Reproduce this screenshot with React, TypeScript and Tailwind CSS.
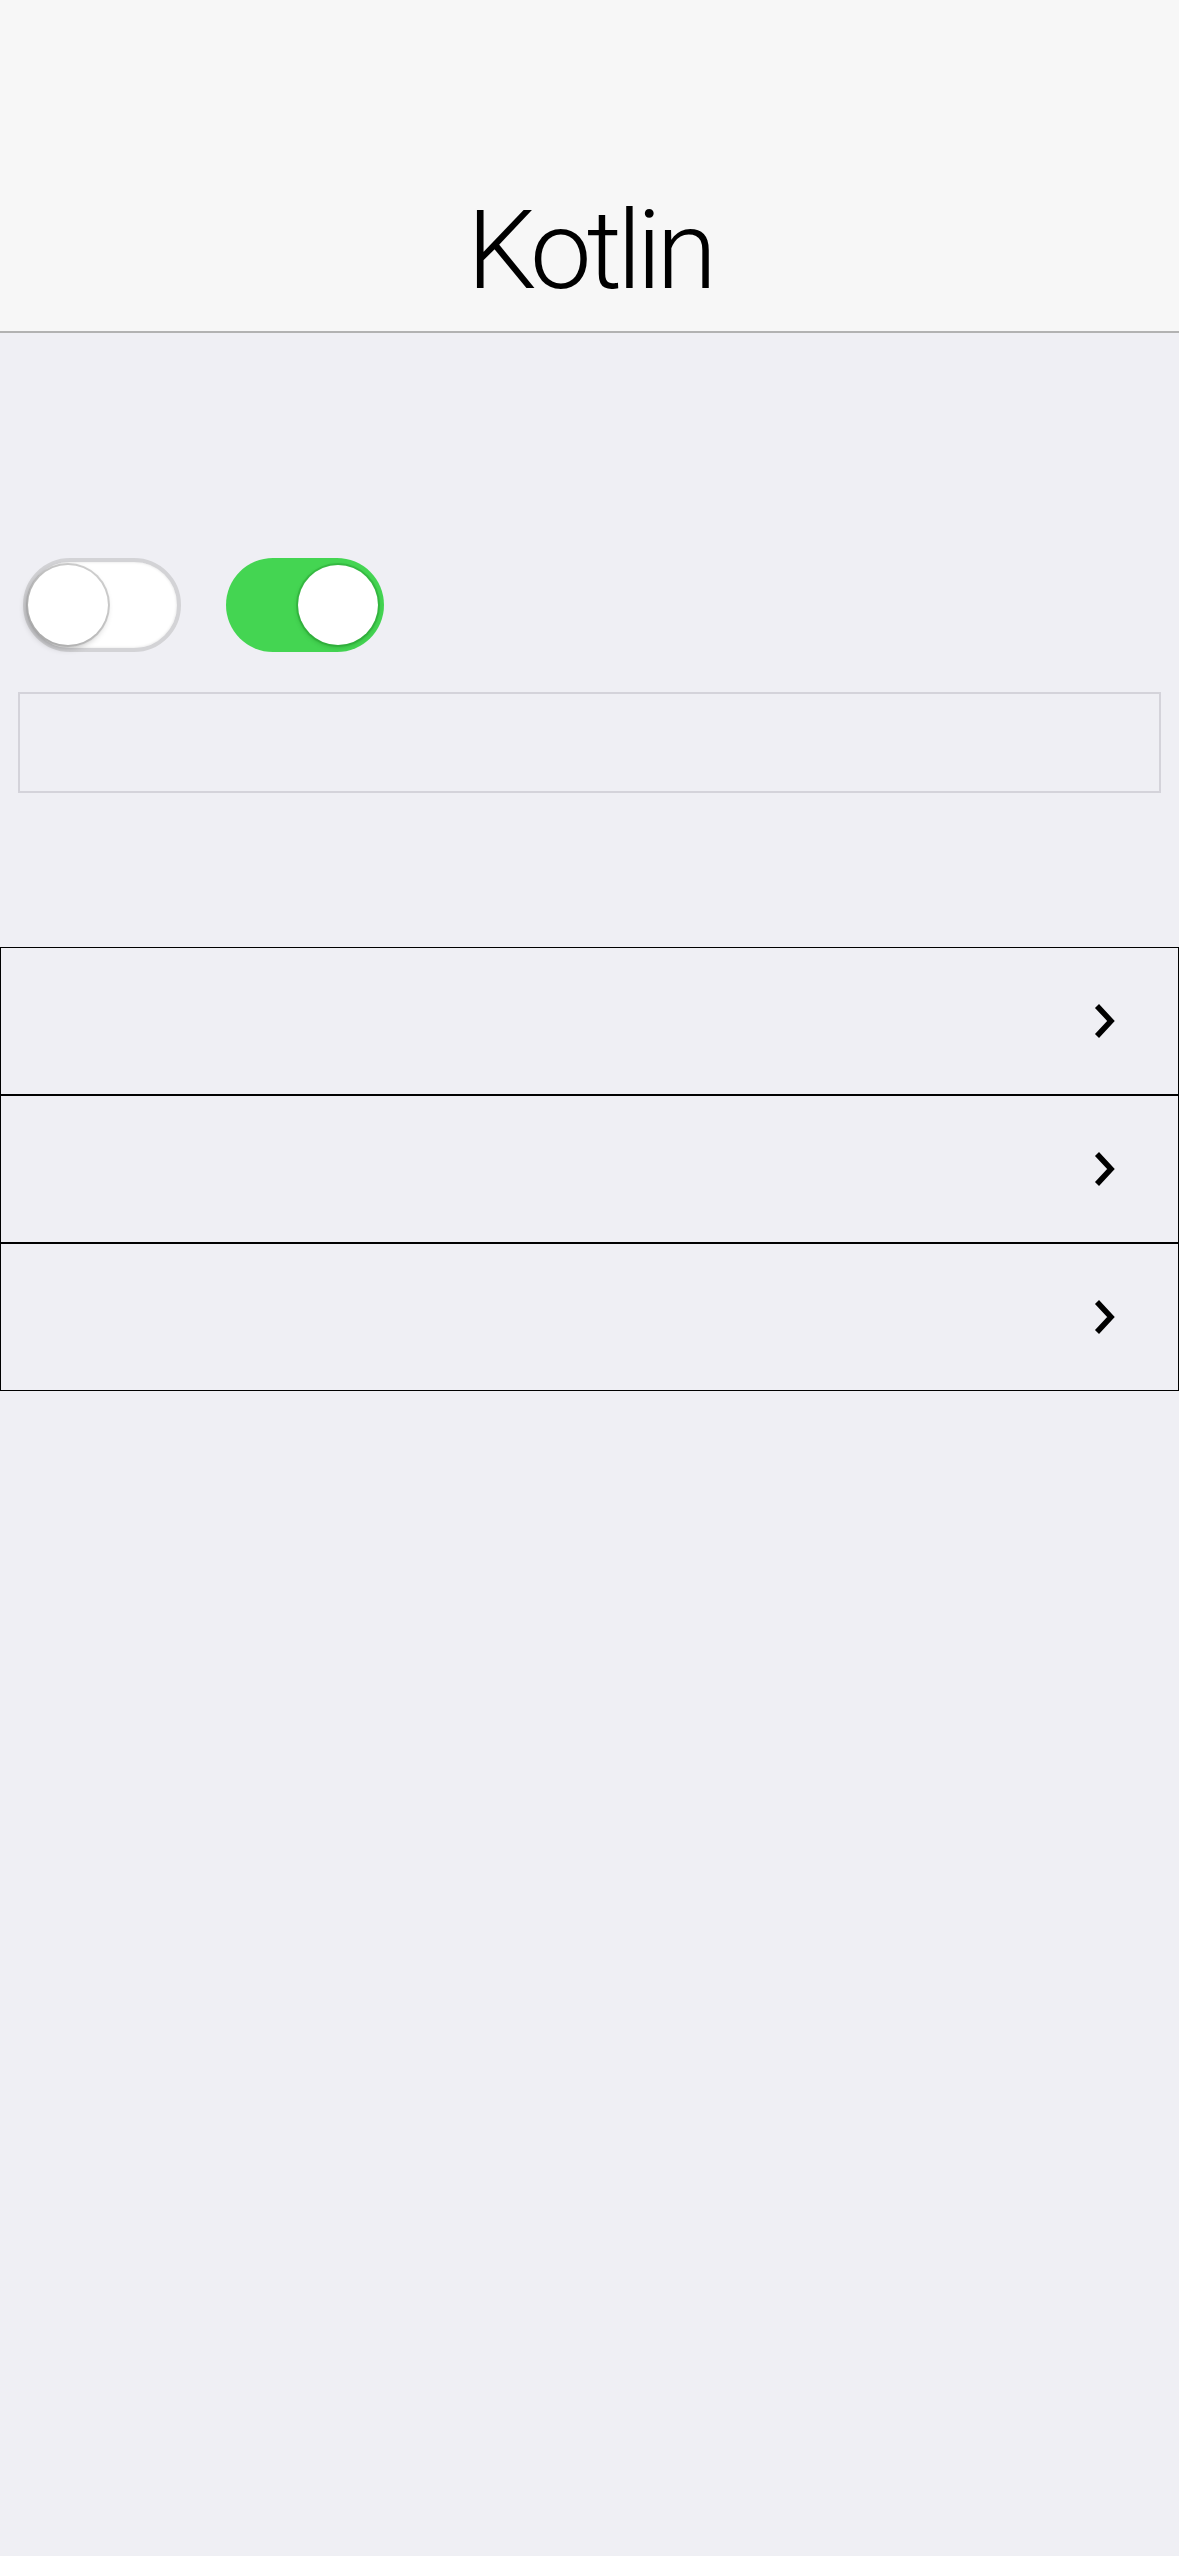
import React, { useState } from 'react';

const Switch: React.FC<{ on: boolean; onToggle: () => void }> = ({ on, onToggle }) => (
  <button
    onClick={onToggle}
    className={`relative w-[158px] h-[94px] rounded-full shrink-0 ${
      on ? 'bg-[#44d552]' : 'bg-white border-[4px] border-[#d3d3d6] shadow-[inset_0_0_3px_rgba(0,0,0,0.12)]'
    }`}
  >
    <span
      className={`absolute top-1/2 -translate-y-1/2 w-[80px] h-[80px] rounded-full bg-white ${
        on
          ? 'right-[6px] shadow-[0_0_0_2px_rgba(40,160,50,0.45),0_2px_5px_rgba(0,80,0,0.3)]'
          : 'left-[1px] shadow-[0_0_0_2px_rgba(150,150,150,0.45),-2px_3px_7px_rgba(0,0,0,0.3)]'
      }`}
    />
  </button>
);

const Chevron = () => (
  <svg width="24" height="36" viewBox="0 0 24 36" fill="none">
    <path d="M4 3 L18 18 L4 33" stroke="#000" strokeWidth="5.5" strokeLinecap="butt" strokeLinejoin="miter" />
  </svg>
);

const Row = () => (
  <div className="h-[148px] border border-black flex items-center justify-end pr-[61px]">
    <Chevron />
  </div>
);

export default function App() {
  const [a, setA] = useState(false);
  const [b, setB] = useState(true);

  return (
    <div className="min-h-screen bg-[#efeff4] font-['Roboto',sans-serif]">
      {/* Nav bar */}
      <header className="h-[333px] bg-[#f7f7f7] border-b-2 border-[#b2b2b2] flex items-end justify-center pb-[25px]">
        <h1 className="text-[110px] leading-none font-light text-black tracking-[-0.045em]">Kotlin</h1>
      </header>

      {/* Switches */}
      <div className="mt-[225px] pl-[23px] flex gap-[45px]">
        <Switch on={a} onToggle={() => setA(!a)} />
        <Switch on={b} onToggle={() => setB(!b)} />
      </div>

      {/* Text field */}
      <div className="mt-[40px] mx-[18px]">
        <input className="w-full h-[101px] border-2 border-[#d4d3da] bg-transparent outline-none px-4 text-5xl" />
      </div>

      {/* Disclosure rows */}
      <div className="mt-[154px]">
        <Row />
        <Row />
        <Row />
      </div>
    </div>
  );
}
